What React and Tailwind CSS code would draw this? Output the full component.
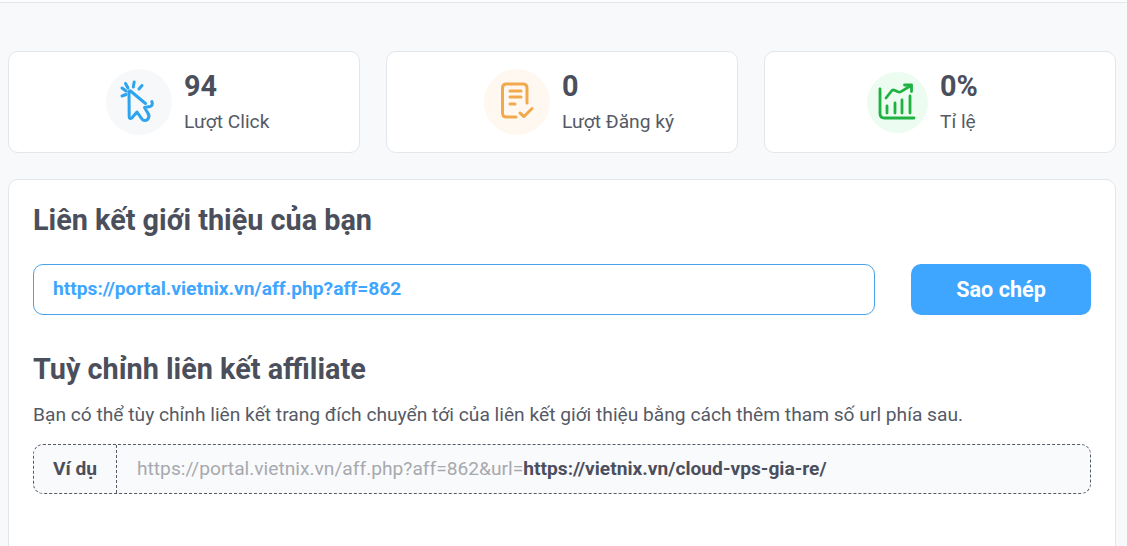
function ClickIcon() {
  return (
    <svg width="48" height="48" viewBox="0 0 48 48" fill="none" stroke="#2ea3ee" strokeWidth="3" strokeLinecap="round" strokeLinejoin="round">
      <path d="M14 14 C13.6 13 14.6 12.4 15.5 13 L30.5 25.5" />
      <path d="M14 14 L14.2 38.5 C14.2 40.8 15.5 41 17 39.8 L22 34 L27 41.2 C28.4 43 31.6 42.8 33 41 C34.4 39 34 36.5 32.5 34.5 L29.5 29.5 L35 28.5 C37.2 28 38 26 36.8 23.5" />
      <path d="M7 10 L11 13 M10.5 5.5 L13 10 M19.2 4 L18.3 9 M27 7.5 L24 11 M7 18 L11 16.5" />
    </svg>
  );
}

function ListIcon() {
  return (
    <svg width="48" height="48" viewBox="-2 0 48 48" fill="none" stroke="#f2a94e" strokeWidth="3" strokeLinecap="round" strokeLinejoin="round">
      <path d="M21 39 H11.5 C9 39 7.5 37.5 7.5 35 V10 C7.5 7.5 9 6 11.5 6 H28 C30.5 6 32 7.5 32 10 V25" />
      <path d="M15 13 H26 M15 19 H26 M15 26 H20" />
      <path d="M25 35 L29 38.5 L37 30.5" />
    </svg>
  );
}

function ChartIcon() {
  return (
    <svg width="48" height="48" viewBox="0 0 48 48" fill="none" stroke="#1fb141" strokeWidth="2.8" strokeLinecap="round" strokeLinejoin="round">
      <path d="M6 11 V35.5 C6 38.5 7.5 40 10.5 40 H40" />
      <path d="M13 35 V28 M21 35 V25 M28 35 V22 M36 35 V18" />
      <path d="M12 20 L17.5 13 C18.2 12 19.2 11.8 20.5 12.3 L24 13.8 C25 14.2 26 14.2 27 13.6 L37 7.5" />
      <path d="M30.5 7 H37.5 V13.5" />
    </svg>
  );
}

function Stat({ tint, icon, value, label, circle }) {
  return (
    <div className="grid h-[102px] flex-1 grid-cols-2 items-center rounded-[10px] border border-[#e3e6ea] bg-white">
      <div className="flex justify-end pr-[12px]">
        <div className={`flex ${circle} items-center justify-center rounded-full ${tint}`}>{icon}</div>
      </div>
      <div className="flex flex-col">
        <span className="text-[28.8px] leading-[36px] font-bold text-[#4b4f5c]">{value}</span>
        <span className="mt-[4px] whitespace-nowrap text-[19.2px] leading-[28px] text-[#555a66]">{label}</span>
      </div>
    </div>
  );
}

export default function App() {
  return (
    <div className="h-[546px] overflow-hidden bg-[#f7f9fb] font-['Roboto',sans-serif]">
      <div className="h-[3px] border-b border-[#e4e6e9] bg-[#fbfcfd]" />
      <div className="pl-[8px] pr-[11px] pt-[48px]">
        <div className="flex gap-[26px]">
          <Stat tint="bg-[#f6f8fa]" circle="size-[66px]" icon={<ClickIcon />} value="94" label="Lượt Click" />
          <Stat tint="bg-[#fef8f0]" circle="size-[66px]" icon={<ListIcon />} value="0" label="Lượt Đăng ký" />
          <Stat tint="bg-[#edfcf0]" circle="size-[61px]" icon={<ChartIcon />} value="0%" label="Tỉ lệ" />
        </div>
        <div className="mt-[26px] h-[400px] rounded-t-[10px] border border-[#e3e6ea] bg-white px-[24px] pt-[21px]">
          <h2 className="text-[28.8px] leading-[38px] font-bold text-[#4b4f5c]">Liên kết giới thiệu của bạn</h2>
          <div className="mt-[25px] flex gap-[36px]">
            <div className="flex h-[51px] flex-1 items-center rounded-[10px] border border-[#4aa3e8] px-[19px] text-[19.2px] font-bold text-[#3ea6ff]">
              https://portal.vietnix.vn/aff.php?aff=862
            </div>
            <button className="h-[51px] w-[180px] rounded-[10px] bg-[#3ea6ff] pt-[2px] text-[21.6px] font-bold text-white">Sao chép</button>
          </div>
          <h2 className="mt-[35px] text-[28.8px] leading-[38px] font-bold text-[#4b4f5c]">Tuỳ chỉnh liên kết affiliate</h2>
          <p className="mt-[14px] text-[19.2px] leading-[26px] text-[#555a66]">
            Bạn có thể tùy chỉnh liên kết trang đích chuyển tới của liên kết giới thiệu bằng cách thêm tham số url phía sau.
          </p>
          <div className="mt-[16px] flex h-[50px] items-center rounded-[10px] border border-dashed border-[#555a66] bg-[#f9fafc] text-[19.2px]">
            <div className="flex h-full w-[83px] items-center justify-center border-r border-dashed border-[#555a66] font-bold text-[#4b4f5c]">Ví dụ</div>
            <div className="pl-[20px] text-[#a7a9ae]">
              https://portal.vietnix.vn/aff.php?aff=862&amp;url=<span className="font-bold text-[#4b4f5c]">https://vietnix.vn/cloud-vps-gia-re/</span>
            </div>
          </div>
        </div>
      </div>
    </div>
  );
}
